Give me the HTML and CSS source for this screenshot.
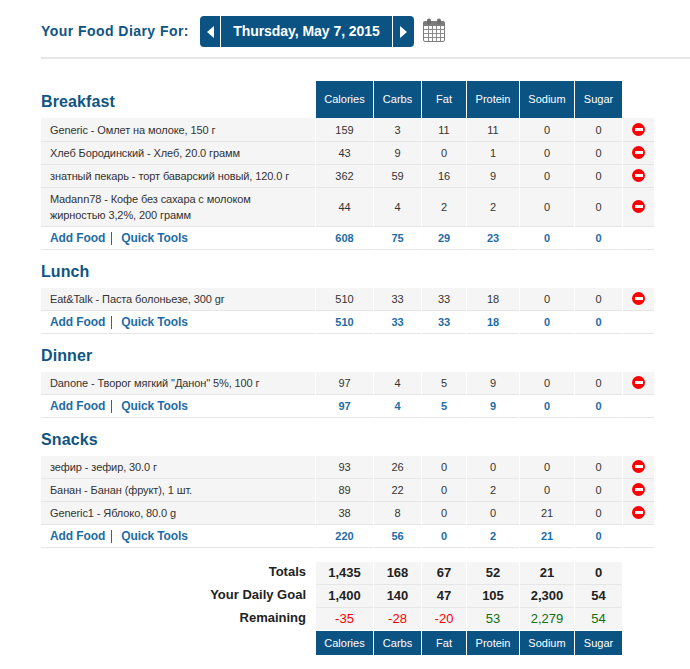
FILE: index.html
```html
<!DOCTYPE html>
<html lang="en">

<head>
    <meta charset="UTF-8">
    <meta name="viewport" content="width=device-width, initial-scale=1.0">
    <title>Food Diary</title>
    <link rel="stylesheet" href="styles.css">
</head>

<body>
    <div class="diary-header">
        <h1 class="diary-title">Your Food Diary For:</h1>
        <div class="date-nav">
            <a class="date-arrow" href="#"><span class="arrow-left"></span></a>
            <span class="date-current">Thursday, May 7, 2015</span>
            <a class="date-arrow" href="#"><span class="arrow-right"></span></a>
        </div>
        <svg class="calendar-icon" width="22" height="24" viewBox="0 0 22 24">
            <rect x="0.500" y="3.500" width="21" height="20" rx="1.500" fill="#fff" stroke="#7d7d7d"/>
            <rect x="0.500" y="3.500" width="21" height="4.500" fill="#7d7d7d"/>
            <rect x="4" y="0.500" width="4" height="6" rx="2" fill="#6e6e6e"/>
            <rect x="14" y="0.500" width="4" height="6" rx="2" fill="#6e6e6e"/>
            <path d="M1 11.500H21M1 15.500H21M1 19.500H21M5.500 8V23M9.500 8V23M13.500 8V23M17.500 8V23" stroke="#8a8a8a" stroke-width="1" fill="none"/>
        </svg>
    </div>

    <div class="diary">
        <table class="meal">
            <colgroup>
                <col class="col-name"><col class="col-cal"><col class="col-carbs"><col class="col-fat"><col class="col-protein"><col class="col-sodium"><col class="col-sugar"><col class="col-del">
            </colgroup>
            <thead>
                <tr>
                    <th class="meal-head"><h2 class="meal-title">Breakfast</h2></th>
                    <th class="nutrient">Calories</th>
                    <th class="nutrient">Carbs</th>
                    <th class="nutrient">Fat</th>
                    <th class="nutrient">Protein</th>
                    <th class="nutrient">Sodium</th>
                    <th class="nutrient">Sugar</th>
                    <th></th>
                </tr>
            </thead>
            <tbody>
                <tr class="food">
                    <td class="name">Generic - Омлет на молоке, 150 г</td>
                    <td>159</td><td>3</td><td>11</td><td>11</td><td>0</td><td>0</td>
                    <td><span class="remove"></span></td>
                </tr>
                <tr class="food">
                    <td class="name">Хлеб Бородинский - Хлеб, 20.0 грамм</td>
                    <td>43</td><td>9</td><td>0</td><td>1</td><td>0</td><td>0</td>
                    <td><span class="remove"></span></td>
                </tr>
                <tr class="food">
                    <td class="name">знатный пекарь - торт баварский новый, 120.0 г</td>
                    <td>362</td><td>59</td><td>16</td><td>9</td><td>0</td><td>0</td>
                    <td><span class="remove"></span></td>
                </tr>
                <tr class="food">
                    <td class="name">Madann78 - Кофе без сахара с молоком<br>жирностью 3,2%, 200 грамм</td>
                    <td>44</td><td>4</td><td>2</td><td>2</td><td>0</td><td>0</td>
                    <td><span class="remove"></span></td>
                </tr>
                <tr class="subtotal">
                    <td class="name"><a class="tool-link first" href="#">Add Food</a><a class="tool-link" href="#">Quick Tools</a></td>
                    <td>608</td><td>75</td><td>29</td><td>23</td><td>0</td><td>0</td><td></td>
                </tr>
            </tbody>
        </table>

        <h2 class="meal-title block">Lunch</h2>
        <table class="meal">
            <colgroup>
                <col class="col-name"><col class="col-cal"><col class="col-carbs"><col class="col-fat"><col class="col-protein"><col class="col-sodium"><col class="col-sugar"><col class="col-del">
            </colgroup>
            <tbody>
                <tr class="food">
                    <td class="name">Eat&amp;Talk - Паста болоньезе, 300 gr</td>
                    <td>510</td><td>33</td><td>33</td><td>18</td><td>0</td><td>0</td>
                    <td><span class="remove"></span></td>
                </tr>
                <tr class="subtotal">
                    <td class="name"><a class="tool-link first" href="#">Add Food</a><a class="tool-link" href="#">Quick Tools</a></td>
                    <td>510</td><td>33</td><td>33</td><td>18</td><td>0</td><td>0</td><td></td>
                </tr>
            </tbody>
        </table>

        <h2 class="meal-title block">Dinner</h2>
        <table class="meal">
            <colgroup>
                <col class="col-name"><col class="col-cal"><col class="col-carbs"><col class="col-fat"><col class="col-protein"><col class="col-sodium"><col class="col-sugar"><col class="col-del">
            </colgroup>
            <tbody>
                <tr class="food">
                    <td class="name">Danone - Творог мягкий "Данон" 5%, 100 г</td>
                    <td>97</td><td>4</td><td>5</td><td>9</td><td>0</td><td>0</td>
                    <td><span class="remove"></span></td>
                </tr>
                <tr class="subtotal">
                    <td class="name"><a class="tool-link first" href="#">Add Food</a><a class="tool-link" href="#">Quick Tools</a></td>
                    <td>97</td><td>4</td><td>5</td><td>9</td><td>0</td><td>0</td><td></td>
                </tr>
            </tbody>
        </table>

        <h2 class="meal-title block">Snacks</h2>
        <table class="meal">
            <colgroup>
                <col class="col-name"><col class="col-cal"><col class="col-carbs"><col class="col-fat"><col class="col-protein"><col class="col-sodium"><col class="col-sugar"><col class="col-del">
            </colgroup>
            <tbody>
                <tr class="food">
                    <td class="name">зефир - зефир, 30.0 г</td>
                    <td>93</td><td>26</td><td>0</td><td>0</td><td>0</td><td>0</td>
                    <td><span class="remove"></span></td>
                </tr>
                <tr class="food">
                    <td class="name">Банан - Банан (фрукт), 1 шт.</td>
                    <td>89</td><td>22</td><td>0</td><td>2</td><td>0</td><td>0</td>
                    <td><span class="remove"></span></td>
                </tr>
                <tr class="food">
                    <td class="name">Generic1 - Яблоко, 80.0 g</td>
                    <td>38</td><td>8</td><td>0</td><td>0</td><td>21</td><td>0</td>
                    <td><span class="remove"></span></td>
                </tr>
                <tr class="subtotal">
                    <td class="name"><a class="tool-link first" href="#">Add Food</a><a class="tool-link" href="#">Quick Tools</a></td>
                    <td>220</td><td>56</td><td>0</td><td>2</td><td>21</td><td>0</td><td></td>
                </tr>
            </tbody>
        </table>

        <table class="meal totals">
            <colgroup>
                <col class="col-name"><col class="col-cal"><col class="col-carbs"><col class="col-fat"><col class="col-protein"><col class="col-sodium"><col class="col-sugar"><col class="col-del">
            </colgroup>
            <tbody>
                <tr>
                    <td class="label">Totals</td>
                    <td>1,435</td><td>168</td><td>67</td><td>52</td><td>21</td><td>0</td><td class="blank"></td>
                </tr>
                <tr>
                    <td class="label">Your Daily Goal</td>
                    <td>1,400</td><td>140</td><td>47</td><td>105</td><td>2,300</td><td>54</td><td class="blank"></td>
                </tr>
                <tr class="remaining">
                    <td class="label">Remaining</td>
                    <td class="over">-35</td><td class="over">-28</td><td class="over">-20</td><td class="under">53</td><td class="under">2,279</td><td class="under">54</td><td class="blank"></td>
                </tr>
                <tr class="foot">
                    <td class="blank"></td>
                    <th class="nutrient">Calories</th>
                    <th class="nutrient">Carbs</th>
                    <th class="nutrient">Fat</th>
                    <th class="nutrient">Protein</th>
                    <th class="nutrient">Sodium</th>
                    <th class="nutrient">Sugar</th>
                    <td class="blank"></td>
                </tr>
            </tbody>
        </table>
    </div>
</body>

</html>
```

FILE: styles.css
```css
body {
    margin: 0;
    font-family: "Liberation Sans", Arial, sans-serif;
    font-size: 11px;
    color: #333;
    background: #fff;
    overflow-x: hidden;
}

.diary-header {
    display: flex;
    align-items: center;
    height: 31px;
    margin: 0 0 0 41px;
    padding: 16px 0 10px;
    border-bottom: 2px solid #e6e6e6;
}

.diary-title {
    width: 159px;
    margin: 0 0 1px;
    font-size: 14px;
    font-weight: bold;
    letter-spacing: 0.45px;
    color: #0f5583;
}

.date-nav {
    display: flex;
    height: 31px;
    gap: 1px;
}

.date-arrow {
    display: flex;
    align-items: center;
    justify-content: center;
    width: 20px;
    background: #0b5383;
}

.date-arrow:first-child {
    border-radius: 4px 0 0 4px;
}

.date-arrow:last-child {
    width: 21px;
    border-radius: 0 4px 4px 0;
}

.arrow-left,
.arrow-right {
    width: 0;
    height: 0;
    border-top: 6.500px solid transparent;
    border-bottom: 6.500px solid transparent;
}

.arrow-left {
    border-right: 7px solid #fff;
}

.arrow-right {
    border-left: 7px solid #fff;
}

.date-current {
    width: 171px;
    line-height: 31px;
    text-align: center;
    font-size: 14px;
    font-weight: bold;
    letter-spacing: -0.05px;
    color: #fff;
    background: #0b5383;
}

.calendar-icon {
    margin: 0 0 3px 9px;
}

.diary {
    padding: 22px 0 0 40px;
}

.meal {
    width: 615px;
    table-layout: fixed;
    border-collapse: separate;
    border-spacing: 1px 0;
}

.col-name { width: 274px; }
.col-cal { width: 57px; }
.col-carbs { width: 47px; }
.col-fat { width: 44px; }
.col-protein { width: 52px; }
.col-sodium { width: 54px; }
.col-sugar { width: 47px; }
.col-del { width: 31px; }

.meal thead th {
    height: 37px;
    padding: 0;
    border-bottom: 1px solid #f5f5f5;
}

.nutrient {
    padding: 0;
    font-size: 11px;
    font-weight: normal;
    color: #fff;
    text-align: center;
    background: #0b5383;
}

.meal thead th.nutrient {
    height: 36px;
    padding-bottom: 1px;
}

.meal-head {
    text-align: left;
    vertical-align: bottom;
}

.meal-title {
    margin: 0 0 6px;
    font-size: 16px;
    font-weight: bold;
    letter-spacing: 0.1px;
    line-height: 20px;
    color: #0f5583;
}

.meal-title.block {
    margin: 0 0 0 1px;
    height: 38px;
    line-height: 43px;
}

.meal td {
    padding: 3px 0;
    line-height: 16px;
    text-align: center;
    border-bottom: 1px solid #e6e6e6;
}

.food td {
    font-size: 11px;
    background: #f5f5f5;
}

.meal td.name {
    padding-left: 9px;
    text-align: left;
}

.food td.name {
    letter-spacing: -0.1px;
}

.subtotal td {
    font-size: 11px;
    font-weight: bold;
    color: #1f6ca5;
}

.tool-link {
    font-size: 12px;
    font-weight: bold;
    letter-spacing: -0.1px;
    color: #1f6ca5;
    text-decoration: none;
}

.tool-link.first {
    display: inline-block;
    padding-right: 6px;
    margin-right: 9px;
    line-height: 13px;
    border-right: 1px solid #1f6ca5;
}

.remove {
    position: relative;
    display: block;
    width: 13px;
    height: 13px;
    margin: 0 auto 1px;
    border-radius: 50%;
    background: #f00;
}

.remove::after {
    content: "";
    position: absolute;
    left: 2.500px;
    top: 5px;
    width: 8px;
    height: 3px;
    background: #fff;
}

.totals {
    margin-top: 14px;
}

.totals td {
    padding: 3px 0;
    font-size: 13px;
    font-weight: bold;
    color: #222;
    background: #f5f5f5;
}

.totals td.label {
    padding: 2px 9px 5px 0;
    text-align: right;
    background: none;
    border-bottom: none;
}

.totals td.blank {
    background: none;
    border-bottom: none;
}

.remaining td {
    font-weight: normal;
    border-bottom-color: #fff;
}

.remaining td.label {
    font-weight: bold;
}

.remaining td.over {
    color: #f00;
}

.remaining td.under {
    color: #0f6e0f;
}

.foot th {
    height: 24px;
}
```
